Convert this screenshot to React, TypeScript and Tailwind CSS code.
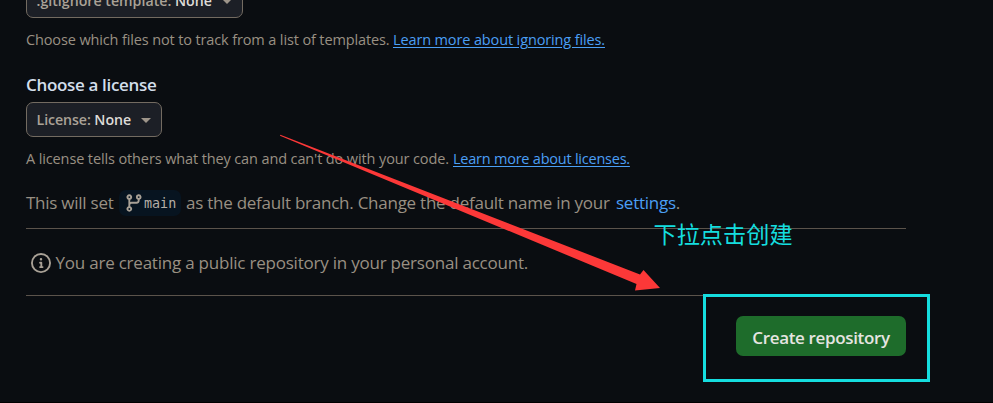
import type { ReactNode } from 'react';

function Caret() {
  return (
    <span className="absolute top-[15px] right-[10px] h-0 w-0 border-x-[5px] border-t-[5px] border-x-transparent border-t-[#9e958a]" />
  );
}

function Select({ label, className }: { label: string; className: string }) {
  return (
    <button
      className={`relative flex h-[35px] items-center rounded-[7px] border border-[#736b61] bg-[#1c1f26] pl-[9.5px] text-[14.2px] font-semibold whitespace-nowrap text-[#aaa297] ${className}`}
    >
      <span>
        {label} <span className="text-[#dedbd7]">None</span>
      </span>
      <Caret />
    </button>
  );
}

type HintProps = { children: ReactNode; link: string; className: string; linkClassName: string };

function Hint({ children, link, className, linkClassName }: HintProps) {
  return (
    <p className="mt-3 flex h-5 text-[14.5px] leading-5 whitespace-nowrap">
      <span className={className}>{children}</span>
      <a className={`text-[#4b9ff5] underline underline-offset-2 ${linkClassName}`}>{link}</a>
    </p>
  );
}

function BranchIcon() {
  return (
    <svg viewBox="0 0 16 16" className="h-[20px] w-[20px] fill-[#a9a196]">
      <path d="M9.5 3.25a2.25 2.25 0 1 1 3 2.122V6A2.5 2.5 0 0 1 10 8.5H6a1 1 0 0 0-1 1v1.128a2.251 2.251 0 1 1-1.5 0V5.372a2.25 2.25 0 1 1 1.5 0v1.836A2.493 2.493 0 0 1 6 7h4a1 1 0 0 0 1-1v-.628A2.25 2.25 0 0 1 9.5 3.25Zm-6 0a.75.75 0 1 0 1.5 0 .75.75 0 0 0-1.5 0Zm8.25-.75a.75.75 0 1 0 0 1.5.75.75 0 0 0 0-1.5ZM4.25 12a.75.75 0 1 0 0 1.5.75.75 0 0 0 0-1.5Z" />
    </svg>
  );
}

function InfoIcon() {
  return (
    <svg viewBox="0 0 16 16" className="h-[20px] w-[20px] fill-[#a9a196]">
      <path d="M0 8a8 8 0 1 1 16 0A8 8 0 0 1 0 8Zm8-6.5a6.5 6.5 0 1 0 0 13 6.5 6.5 0 0 0 0-13ZM6.5 7.75A.75.75 0 0 1 7.25 7h1a.75.75 0 0 1 .75.75v2.75h.25a.75.75 0 0 1 0 1.5h-2a.75.75 0 0 1 0-1.5h.25v-2h-.25a.75.75 0 0 1-.75-.75ZM8 6a1 1 0 1 1 0-2 1 1 0 0 1 0 2Z" />
    </svg>
  );
}

export default function App() {
  return (
    <div className="relative h-[403px] w-[993px] overflow-hidden border-b border-black bg-[#0a0d11] font-['Open_Sans','Noto_Sans',sans-serif] text-[#999083]">
      <main className="ml-[26px] flex w-[880px] flex-col">
        <Select label=".gitignore template:" className="-mt-[17px] w-[217px]" />
        <Hint
          link="Learn more about ignoring files."
          className="w-[367px] tracking-[-0.13px]"
          linkClassName="tracking-[-0.13px]"
        >
          Choose which files not to track from a list of templates.
        </Hint>
        <h2 className="mt-[23px] h-6 text-[17px] leading-6 font-semibold tracking-[-0.33px] text-[#d3deeb]">
          Choose a license
        </h2>
        <Select label="License:" className="mt-[5px] w-[136px] tracking-[-0.08px]" />
        <Hint
          link="Learn more about licenses."
          className="w-[427px] tracking-[-0.12px]"
          linkClassName="tracking-[-0.23px]"
        >
          A license tells others what they can and can't do with your code.
        </Hint>
        <p className="mt-[21px] flex h-[26px] items-center text-[17px] tracking-[-0.25px] whitespace-nowrap">
          <span className="w-[93px]">This will set</span>
          <span className="mr-[5px] flex h-[26px] w-[62px] items-center rounded-[7px] bg-[#071420] pl-[5px] font-['DejaVu_Sans_Mono',monospace] text-[13.4px] tracking-normal text-[#b5aea5]">
            <BranchIcon />
            <span className="pt-[3px]">main</span>
          </span>
          <span className="w-[425px]">as the default branch. Change the default name in your</span>
          <a className="ml-[5px] text-[#4b9ff5]">settings</a>.
        </p>
        <div className="mt-3 flex h-[68px] items-center border-y border-[#5b534b] pt-[2px] pl-[5px] text-[17px] tracking-[-0.22px]">
          <InfoIcon />
          <span className="ml-[4.5px]">You are creating a public repository in your personal account.</span>
        </div>
        <button className="mt-5 h-10 w-[170px] self-end rounded-[7px] bg-[#1e6c2b] pt-[3px] text-[17px] font-semibold tracking-[-0.35px] text-[#e6e5e1]">
          Create repository
        </button>
      </main>
      <svg className="absolute inset-0 h-[403px] w-[993px]" viewBox="0 0 993 403">
        <path d="M280.3 134.7 640 274.5 643.5 270 660 288 635 290.5 636.5 284 280 135.7Z" fill="#fc3838" />
      </svg>
      <div className="absolute top-[294px] left-[703px] h-[88px] w-[227px] border-[3px] border-[#15dddf]" />
      <div className="absolute top-[217px] left-[653.5px] font-['Noto_Sans_CJK_SC',sans-serif] text-[23.2px] leading-8 whitespace-nowrap text-[#15dddf]">
        下拉点击创建
      </div>
    </div>
  );
}
